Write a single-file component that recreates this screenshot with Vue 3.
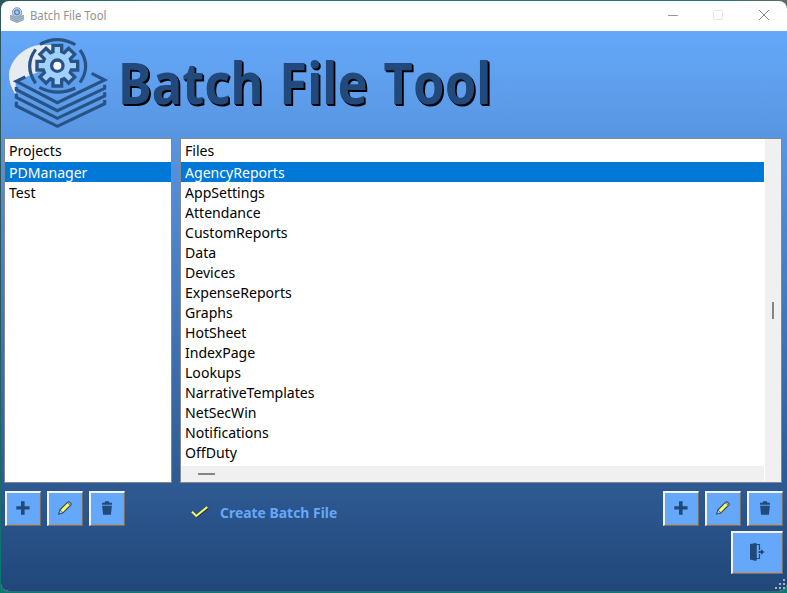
<script setup>
const projects = ['PDManager', 'Test']
const files = ['AgencyReports', 'AppSettings', 'Attendance', 'CustomReports', 'Data', 'Devices', 'ExpenseReports', 'Graphs', 'HotSheet', 'IndexPage', 'Lookups', 'NarrativeTemplates', 'NetSecWin', 'Notifications', 'OffDuty']
const tools = ['add', 'edit', 'delete']

const gear = Array.from({ length: 8 }, (_, i) => {
  const a = (i * Math.PI) / 4
  return [[42, -13], [61, -13], [61, 13], [42, 13]]
    .map(([x, y]) => `${(172 + x * Math.cos(a) - y * Math.sin(a)).toFixed(1)},${(113 + x * Math.sin(a) + y * Math.cos(a)).toFixed(1)}`)
    .join(' ')
}).join(' ')
</script>

<template>
  <div class="desktop">
    <div class="window">
      <svg width="0" height="0" class="defs">
        <symbol id="logo" viewBox="0 0 330 310">
          <path d="M47 202 Q25 165 27 138 C32 90 80 51 125 51 H160 L120 130 L47 160Z" fill="#e8ebef" />
          <g fill="none" stroke="#285386" stroke-width="9.5">
            <path d="M76 147L49 160L172 224L314 156L275 136" />
            <path d="M49 177V185L172 248L314 181V170" />
            <path d="M49 197V208L172 271L314 204V193" />
            <path d="M49 221V234L172 295L314 227V216" />
            <path d="M120 49Q172 20 226 50M107 64Q71 113 107 166M240 66Q274 113 240 164M118 178Q172 206 226 180" />
          </g>
          <polygon :points="gear" fill="#a2d0fd" stroke="#285386" stroke-width="10" />
          <circle cx="172" cy="113" r="17" fill="#fff" stroke="#285386" stroke-width="10" />
        </symbol>
        <symbol id="appicon" viewBox="0 0 16 16">
          <path d="M1 8.5L8 5.5L15 8.5V12L8 15.5L1 12Z" fill="#b4c3d4" />
          <path d="M1 8.5L8 12L15 8.5M1 10.5L8 14L15 10.5M1 12.5L8 15.5L15 12.5" fill="none" stroke="#7d93ae" stroke-width=".9" />
          <circle cx="8" cy="5.3" r="4.6" fill="#c3d9f0" stroke="#8398b3" />
          <circle cx="8" cy="5.3" r="2.4" fill="#a5cdf3" stroke="#5c83b4" stroke-width="1.4" />
        </symbol>
        <symbol id="add" viewBox="0 0 16 16"><path d="M1.3 6.3H6V1.2H9.6V6.3H14.6V9.6H9.6V14.7H6V9.6H1.3Z" fill="#22497b" /></symbol>
        <symbol id="edit" viewBox="0 0 16 16">
          <path d="M1.8 14L3 9.8L10.7 2.1Q11.6 1.4 12.6 2.2L13.7 3.3Q14.4 4.2 13.7 5.1L6 12.8Z" fill="#fffa63" stroke="#294d72" stroke-width="1.2" />
          <path d="M10.4 2.7L13.3 5.6L14 4.4Q13.7 2.1 11.5 2Z" fill="#a9b8c6" stroke="#294d72" stroke-width=".7" />
          <path d="M3 9.8L6 12.8L1.8 14Z" fill="#b9c8d3" stroke="#294d72" stroke-width=".8" />
        </symbol>
        <symbol id="delete" viewBox="0 0 16 16">
          <path d="M3 4.8V2.8H5.5L6.2 1.3H9.8L10.5 2.8H13V4.8Z" fill="#22497b" />
          <path d="M3.1 5.8H12.9L11.9 14.8H4.1Z" fill="#22497b" />
        </symbol>
      </svg>

      <header class="titlebar">
        <svg class="appicon"><use href="#appicon" /></svg>
        <span class="caption">Batch File Tool</span>
        <svg class="controls" width="104" height="12" viewBox="0 0 104 12" fill="none">
          <path d="M1 6.5H11" stroke="#999" />
          <rect x="46.5" y="1.5" width="9" height="9" rx="1" stroke="#e6e6e6" />
          <path d="M92 1L102 11M102 1L92 11" stroke="#8c8c8c" />
        </svg>
      </header>

      <main class="client">
        <div class="banner">
          <svg class="logo"><use href="#logo" /></svg>
          <h1>Batch File Tool</h1>
        </div>

        <div class="panels">
          <section class="panel projects">
            <div class="head"><span>Projects</span></div>
            <div v-for="(p, i) in projects" :key="p" class="row" :class="{ selected: i === 0 }"><span>{{ p }}</span></div>
          </section>
          <section class="panel files">
            <div class="list">
              <div class="head"><span>Files</span></div>
              <div v-for="(f, i) in files" :key="f" class="row" :class="{ selected: i === 0 }"><span>{{ f }}</span></div>
              <div class="hscroll"><i></i></div>
            </div>
            <div class="vscroll"><i></i></div>
          </section>
        </div>

        <div class="actions">
          <div class="tools">
            <button v-for="t in tools" :key="t" class="btn"><svg width="16" height="16"><use :href="'#' + t" /></svg></button>
          </div>
          <div class="create">
            <svg width="18" height="14" viewBox="0 0 18 14" fill="none"><path d="M2 7.8L5.8 11.8L17 3" stroke="#173761" stroke-width="2" /><path d="M1 6.7L5.3 11L16.3 2" stroke="#fff95c" stroke-width="2" /></svg>
            <span>Create Batch File</span>
          </div>
          <div class="tools right">
            <button v-for="t in tools" :key="t" class="btn"><svg width="16" height="16"><use :href="'#' + t" /></svg></button>
          </div>
        </div>
        <div class="footer">
          <button class="btn exit">
            <svg width="16" height="20" viewBox="0 0 16 20">
              <path d="M1 2L7 1V19L1 17.5Z" fill="#22497b" />
              <path d="M6 2.5H10.5V8M10.5 12V16.5H6" fill="none" stroke="#22497b" stroke-width="1.2" />
              <path d="M7 1.5V18.5" stroke="#22497b" stroke-width="1.5" />
              <path d="M9.5 9H12V7.3L15.5 10L12 12.7V11H9.5Z" fill="#22497b" />
            </svg>
          </button>
        </div>
        <svg class="grip" width="10" height="10" fill="#adb1b5"><path d="M8 0h2v2h-2zM4 4h2v2h-2zM8 4h2v2h-2zM0 8h2v2h-2zM4 8h2v2h-2zM8 8h2v2h-2z" /></svg>
      </main>
    </div>
  </div>
</template>

<style>
body { margin: 0; overflow: hidden; }
</style>

<style scoped>
* { box-sizing: border-box; }
.desktop { width: 787px; height: 593px; padding: 1px 0 0 1px; background: linear-gradient(transparent 50%, #087a70 97%), linear-gradient(90deg, #2d555c, #2d7476 20%, #2d7476 92%, #62686b); font-family: "Noto Sans", "Open Sans", sans-serif; }
.window { width: 786px; height: 591px; border-radius: 8px; overflow: hidden; background: #fff; display: flex; flex-direction: column; border-bottom: 1px solid #2d6b75; }
.defs { position: absolute; }
.titlebar { height: 30px; flex: none; display: flex; align-items: center; padding: 0 16px 0 8px; }
.appicon { width: 16px; height: 16px; margin-top: -2px; }
.caption { font-size: 12px; color: #929292; margin: -1px 0 0 5px; transform: scaleX(.945); transform-origin: left; white-space: nowrap; }
.controls { margin: -2px 0 0 auto; }
.client { flex: 1; position: relative; padding: 0 3px; background: linear-gradient(#65a8f9, #21477a); display: flex; flex-direction: column; }
.banner { height: 107px; flex: none; display: flex; align-items: center; }
.logo { width: 110px; height: 103.33px; margin: -10px 0 0 -4px; flex: none; }
h1 { margin: -6px 0 0 7.5px; font-size: 57.5px; line-height: 80px; font-weight: 700; color: #22497b; text-shadow: 1px 1px #000, 2px 2px #000; white-space: nowrap; word-spacing: 3px; font-kerning: none; transform: scaleX(.883); transform-origin: left; }
.panels { display: flex; gap: 8px; height: 345px; flex: none; }
.panel { border: 1px solid #828790; background: #fff; font-size: 15px; color: #000; }
.panel span { display: inline-block; transform: scaleX(.938); transform-origin: left; white-space: nowrap; }
.projects { width: 168px; }
.files { width: 602px; display: flex; justify-content: space-between; }
.list { width: 583px; display: flex; flex-direction: column; }
.head { height: 23px; line-height: 23px; padding-left: 4px; }
.row { height: 20px; line-height: 21px; padding-left: 4px; }
.row.selected { background: #0078d7; color: #fff; }
.hscroll { margin-top: auto; height: 16px; background: #f0f0f0; padding: 7px 0 0 17px; }
.hscroll i { display: block; width: 17px; height: 2px; background: #858585; }
.vscroll { width: 16px; background: #f0f0f0; padding: 163px 0 0 7px; }
.vscroll i { display: block; width: 2px; height: 17px; background: #858585; }
.actions { display: flex; height: 35px; margin-top: 8px; padding-left: 1px; flex: none; }
.tools { display: flex; gap: 6px; }
.btn { width: 36px; height: 35px; padding: 0 1px 2px 0; background: #65a8f9; border: solid; border-width: 2px 1px 1px 2px; border-color: #f3f3f3 #776e66 #776e66 #f3f3f3; display: flex; align-items: center; justify-content: center; box-shadow: inset -1px -1px #9a9a9a; }
.create { display: flex; align-items: center; margin: 7px 0 0 66px; color: #65a8f9; font-size: 15px; font-weight: 700; }
.create span { margin-left: 11px; white-space: nowrap; transform: scaleX(.928); transform-origin: left; }
.right { margin-left: auto; margin-right: 1px; }
.footer { display: flex; justify-content: flex-end; margin-top: 5px; }
.exit { width: 52px; height: 43px; margin-right: 1px; }
.grip { position: absolute; right: 2px; bottom: 2px; }
</style>
